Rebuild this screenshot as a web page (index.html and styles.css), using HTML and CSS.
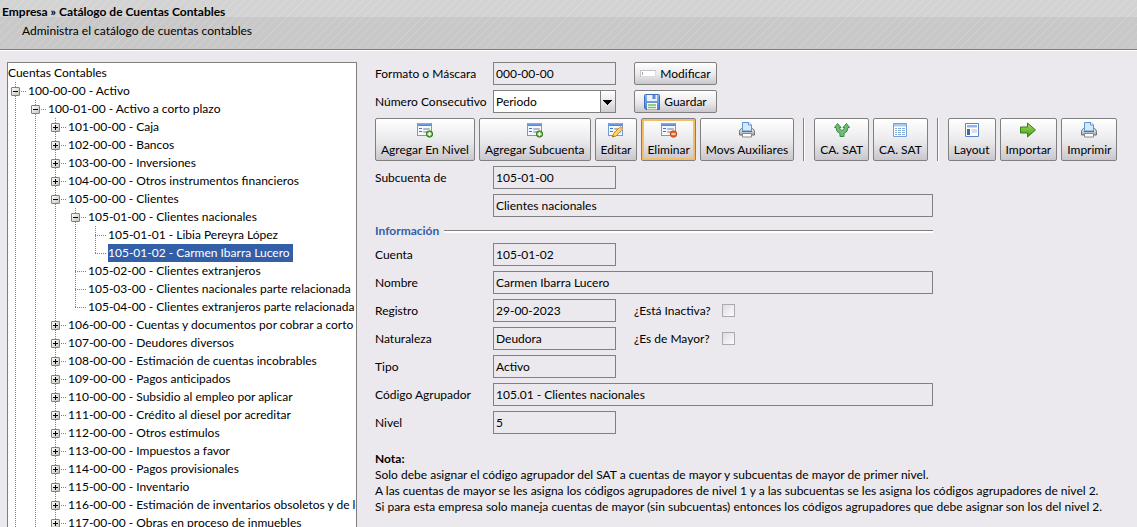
FILE: index.html
```html
<!DOCTYPE html>
<html lang="es">
<head>
<meta charset="utf-8">
<title>Catálogo de Cuentas Contables</title>
<link rel="stylesheet" href="styles.css">
</head>
<body>
<svg class="defs" aria-hidden="true">
  <defs>
    <linearGradient id="blue" x1="0" y1="0" x2="0" y2="1"><stop offset="0" stop-color="#8db8ea"/><stop offset="1" stop-color="#4a7fcb"/></linearGradient>
    <linearGradient id="green" x1="0" y1="0" x2="0" y2="1"><stop offset="0" stop-color="#a9e05a"/><stop offset="1" stop-color="#3f9a1c"/></linearGradient>
    <linearGradient id="steel" x1="0" y1="0" x2="0" y2="1"><stop offset="0" stop-color="#f4f4f4"/><stop offset="1" stop-color="#a2a4a8"/></linearGradient>
    <symbol id="form" viewBox="0 0 16 16">
      <rect x=".5" y="1.5" width="14" height="12" fill="#f4f8fe" stroke="#6f9bd8"/>
      <rect x="1" y="1" width="13" height="3" fill="url(#blue)"/>
      <path d="M2 6.500h3M2 9.500h3" stroke="#4577bf"/>
      <path d="M6.500 6.500h6v1h-6zM6.500 9.500h6v1h-6z" fill="#fff" stroke="#b5b8bd"/>
    </symbol>
    <symbol id="printer" viewBox="0 0 16 16">
      <path d="M2.500 6.500h11q2 1 2 3v3.500h-15v-3.500q0-2 2-3z" fill="url(#steel)" stroke="#707378"/>
      <path d="M3.500.5h6.500l2.500 2.500v6h-9z" fill="#d6e8fc" stroke="#5b94dc"/>
      <path d="M9.500.5v2.500h3" fill="#fff" stroke="#5b94dc"/>
      <path d="M3 9.500h10" stroke="#6a6d72"/>
      <path d="M3.500 11.500h9v3.500h-9z" fill="#fff" stroke="#85888d"/>
    </symbol>
  </defs>
</svg>

<header class="banner">
  <h1 class="banner-title">Empresa » Catálogo de Cuentas Contables</h1>
  <p class="banner-text">Administra el catálogo de cuentas contables</p>
</header>

<div class="layout">
  <nav class="tree" aria-label="Cuentas Contables">
    <div class="tree-root">Cuentas Contables</div>
    <ul>
      <li><div class="row"><button class="toggle minus" aria-label="Contraer"></button><span class="label">100-00-00 - Activo</span></div>
        <ul>
          <li><div class="row"><button class="toggle minus" aria-label="Contraer"></button><span class="label">100-01-00 - Activo a corto plazo</span></div>
            <ul>
              <li><div class="row"><button class="toggle" aria-label="Expandir"></button><span class="label">101-00-00 - Caja</span></div></li>
              <li><div class="row"><button class="toggle" aria-label="Expandir"></button><span class="label">102-00-00 - Bancos</span></div></li>
              <li><div class="row"><button class="toggle" aria-label="Expandir"></button><span class="label">103-00-00 - Inversiones</span></div></li>
              <li><div class="row"><button class="toggle" aria-label="Expandir"></button><span class="label">104-00-00 - Otros instrumentos financieros</span></div></li>
              <li><div class="row"><button class="toggle minus" aria-label="Contraer"></button><span class="label">105-00-00 - Clientes</span></div>
                <ul>
                  <li><div class="row"><button class="toggle minus" aria-label="Contraer"></button><span class="label">105-01-00 - Clientes nacionales</span></div>
                    <ul>
                      <li><div class="row leaf"><span class="label">105-01-01 - Libia Pereyra López</span></div></li>
                      <li class="last"><div class="row leaf"><span class="label selected">105-01-02 - Carmen Ibarra Lucero</span></div></li>
                    </ul>
                  </li>
                  <li><div class="row leaf"><span class="label">105-02-00 - Clientes extranjeros</span></div></li>
                  <li><div class="row leaf"><span class="label">105-03-00 - Clientes nacionales parte relacionada</span></div></li>
                  <li class="last"><div class="row leaf"><span class="label">105-04-00 - Clientes extranjeros parte relacionada</span></div></li>
                </ul>
              </li>
              <li><div class="row"><button class="toggle" aria-label="Expandir"></button><span class="label">106-00-00 - Cuentas y documentos por cobrar a corto plazo</span></div></li>
              <li><div class="row"><button class="toggle" aria-label="Expandir"></button><span class="label">107-00-00 - Deudores diversos</span></div></li>
              <li><div class="row"><button class="toggle" aria-label="Expandir"></button><span class="label">108-00-00 - Estimación de cuentas incobrables</span></div></li>
              <li><div class="row"><button class="toggle" aria-label="Expandir"></button><span class="label">109-00-00 - Pagos anticipados</span></div></li>
              <li><div class="row"><button class="toggle" aria-label="Expandir"></button><span class="label">110-00-00 - Subsidio al empleo por aplicar</span></div></li>
              <li><div class="row"><button class="toggle" aria-label="Expandir"></button><span class="label">111-00-00 - Crédito al diesel por acreditar</span></div></li>
              <li><div class="row"><button class="toggle" aria-label="Expandir"></button><span class="label">112-00-00 - Otros estímulos</span></div></li>
              <li><div class="row"><button class="toggle" aria-label="Expandir"></button><span class="label">113-00-00 - Impuestos a favor</span></div></li>
              <li><div class="row"><button class="toggle" aria-label="Expandir"></button><span class="label">114-00-00 - Pagos provisionales</span></div></li>
              <li><div class="row"><button class="toggle" aria-label="Expandir"></button><span class="label">115-00-00 - Inventario</span></div></li>
              <li><div class="row"><button class="toggle" aria-label="Expandir"></button><span class="label">116-00-00 - Estimación de inventarios obsoletos y de lento movimiento</span></div></li>
              <li><div class="row"><button class="toggle" aria-label="Expandir"></button><span class="label">117-00-00 - Obras en proceso de inmuebles</span></div></li>
            </ul>
          </li>
        </ul>
      </li>
    </ul>
  </nav>

  <main class="content">
    <div class="form">
      <label for="mascara">Formato o Máscara</label>
      <input id="mascara" class="field" type="text" value="000-00-00" readonly>
      <button class="btn aside">
        <svg class="icon" viewBox="0 0 16 16"><path d="M.5 4.500h15v6h-15z" fill="#fff" stroke="#dcdcde"/><path d="M0 4.500h16M.5 4v7" stroke="#c4c4c8"/><path d="M2.500 6v3" stroke="#aaa"/></svg>
        Modificar
      </button>

      <label for="consecutivo">Número Consecutivo</label>
      <select id="consecutivo" class="field select"><option>Periodo</option></select>
      <button class="btn aside">
        <svg class="icon" viewBox="0 0 16 16"><path d="M.5 1.500q0-1 1-1h13q1 0 1 1v14h-13.500l-1.500-1.500z" fill="url(#blue)" stroke="#3d6fbd"/><path d="M3 1h10v6h-10z" fill="#e8f1fc"/><path d="M8.500 1h3v4h-3z" fill="#5a8bd2"/><path d="M3 9h10v6.500h-10z" fill="#fff"/><path d="M4 11h8M4 13.500h8" stroke="#7dbb5d" stroke-width="1.500"/></svg>
        Guardar
      </button>
    </div>

    <div class="toolbar">
      <button class="btn tool"><svg class="icon" viewBox="0 0 16 16"><use href="#form"/><circle cx="12.500" cy="12" r="3.200" fill="#5fa83c" stroke="#3b7c22"/><path d="M12.500 10v4M10.500 12h4" stroke="#fff" stroke-width="1.300"/></svg>Agregar En Nivel</button>
      <button class="btn tool"><svg class="icon" viewBox="0 0 16 16"><use href="#form"/><circle cx="12.500" cy="12" r="3.200" fill="#5fa83c" stroke="#3b7c22"/><path d="M12.500 10v4M10.500 12h4" stroke="#fff" stroke-width="1.300"/></svg>Agregar Subcuenta</button>
      <button class="btn tool"><svg class="icon" viewBox="0 0 16 16"><use href="#form"/><path d="M12.500 4.500l2.500 2.500-7 7-3.500 1 1-3.500z" fill="#fbd466" stroke="#c98b1e"/><path d="M12.500 4.500l2.500 2.500-1.500 1.500-2.500-2.500z" fill="#f3b28c"/><path d="M4.500 15l.5-1.500 1 1z" fill="#444"/></svg>Editar</button>
      <button class="btn tool hot"><svg class="icon" viewBox="0 0 16 16"><use href="#form"/><circle cx="12.500" cy="12" r="3.200" fill="#ee6a2c" stroke="#c5430f"/><path d="M10.500 12h4" stroke="#fff" stroke-width="1.300"/></svg>Eliminar</button>
      <button class="btn tool"><svg class="icon" viewBox="0 0 16 16"><use href="#printer"/></svg>Movs Auxiliares</button>
      <span class="divider"></span>
      <button class="btn tool"><svg class="icon" viewBox="0 0 16 16"><path d="M6 14.500v-3q-4-1.500-4-6h-1.500l3-4 3.500 4h-1.500q0 2.500 2.500 3 2.500-.5 2.500-3h-1.500l3.500-4 3 4h-1.500q0 4.500-4 6v3z" fill="#72bd76" stroke="#3b8b47"/></svg>CA. SAT</button>
      <button class="btn tool"><svg class="icon" viewBox="0 0 16 16"><path d="M1.500 1.500h13v13h-13z" fill="#fff" stroke="#6f9fdc"/><path d="M2 2h12v2.500h-12z" fill="#a9c9f1"/><path d="M3 6.500h2M6 6.500h3M10 6.500h3M3 8.500h2M6 8.500h3M10 8.500h3M3 10.500h2M6 10.500h3M10 10.500h3M3 12.500h2M6 12.500h3M10 12.500h3" stroke="#84abd9"/></svg>CA. SAT</button>
      <span class="divider"></span>
      <button class="btn tool"><svg class="icon" viewBox="0 0 16 16"><path d="M1.500 1.500h13v13h-13z" fill="#fff" stroke="#5686cc"/><path d="M3 3h10v2.500h-10z" fill="#8db6ea"/><path d="M3 7h3v6h-3z" fill="#3769b5"/><path d="M7.500 7h5.500v4h-5.500z" fill="#dcdee2"/></svg>Layout</button>
      <button class="btn tool"><svg class="icon" viewBox="0 0 16 16"><path d="M.5 5h7v-4l8 7-8 7v-4h-7z" fill="url(#green)" stroke="#357f1b"/></svg>Importar</button>
      <button class="btn tool"><svg class="icon" viewBox="0 0 16 16"><use href="#printer"/></svg>Imprimir</button>
    </div>

    <div class="form">
      <label for="subcuenta">Subcuenta de</label>
      <input id="subcuenta" class="field" type="text" value="105-01-00" readonly>
      <input class="field wide" type="text" value="Clientes nacionales" aria-label="Nombre de la subcuenta" readonly>
      <h2 class="section">Información</h2>
      <label for="cuenta">Cuenta</label>
      <input id="cuenta" class="field" type="text" value="105-01-02" readonly>
      <label for="nombre">Nombre</label>
      <input id="nombre" class="field wide" type="text" value="Carmen Ibarra Lucero" readonly>
      <label for="registro">Registro</label>
      <input id="registro" class="field" type="text" value="29-00-2023" readonly>
      <div class="check"><label for="inactiva">¿Está Inactiva?</label><input id="inactiva" type="checkbox"></div>
      <label for="naturaleza">Naturaleza</label>
      <input id="naturaleza" class="field" type="text" value="Deudora" readonly>
      <div class="check"><label for="mayor">¿Es de Mayor?</label><input id="mayor" type="checkbox"></div>
      <label for="tipo">Tipo</label>
      <input id="tipo" class="field" type="text" value="Activo" readonly>
      <label for="codigo">Código Agrupador</label>
      <input id="codigo" class="field wide" type="text" value="105.01 - Clientes nacionales" readonly>
      <label for="nivel">Nivel</label>
      <input id="nivel" class="field" type="text" value="5" readonly>
    </div>

    <div class="note">
      <strong>Nota:</strong>
      <p>Solo debe asignar el código agrupador del SAT a cuentas de mayor y subcuentas de mayor de primer nivel.</p>
      <p>A las cuentas de mayor se les asigna los códigos agrupadores de nivel 1 y a las subcuentas se les asigna los códigos agrupadores de nivel 2.</p>
      <p>Si para esta empresa solo maneja cuentas de mayor (sin subcuentas) entonces los códigos agrupadores que debe asignar son los del nivel 2.</p>
    </div>
  </main>
</div>
</body>
</html>
```

FILE: styles.css
```css
* { box-sizing: border-box; }

body {
  display: flex;
  flex-direction: column;
  height: 100vh;
  margin: 0;
  overflow: hidden;
  background: #ebe9ed;
  color: #000;
  font: 12px/16px Lato, "Open Sans", sans-serif;
}

button, input, select { font: inherit; color: inherit; }
h1, h2, p, ul { margin: 0; padding: 0; font-size: inherit; }
ul { list-style: none; }
.defs { position: absolute; width: 0; height: 0; }

.banner {
  flex: none;
  height: 51px;
  padding: 4px 2px;
  border-bottom: 1px solid #fff;
  box-shadow: inset 0 -1px #808080;
  background:
    repeating-linear-gradient(135deg, transparent 0 4px, rgba(255, 255, 255, .16) 5px, transparent 6px),
    linear-gradient(#d3d3d3 17px, #c8c8c8 17px);
}
.banner-text { padding: 3px 20px; }

.layout {
  display: flex;
  flex: 1;
  min-height: 0;
  gap: 18px;
  padding: 11px 8px 0 7px;
}

.tree {
  flex: none;
  width: 350px;
  padding-top: 1px;
  overflow: hidden;
  border: 1px solid #808080;
  border-bottom: 0;
  background: #fff;
  line-height: 18px;
  white-space: nowrap;
}
.tree li {
  background: repeating-linear-gradient(#808080 0 1px, transparent 1px 2px) 7px 0 / 1px 100% no-repeat;
}
.tree li.last { background-size: 1px 10px; }
.tree li ul { padding-left: 20px; }
.row {
  display: flex;
  align-items: center;
  gap: 8px;
  height: 18px;
  padding-left: 3px;
  background: repeating-linear-gradient(90deg, #808080 0 1px, transparent 1px 2px) 7px 9px / 12px 1px no-repeat;
}
.row.leaf { padding-left: 20px; }
.label { padding-right: 3px; }
.selected { background: #335ea8; color: #fff; }
.toggle {
  flex: none;
  width: 9px;
  height: 9px;
  padding: 0;
  border: 1px solid #808080;
  border-radius: 1px;
  background:
    linear-gradient(#000, #000) center / 5px 1px no-repeat,
    linear-gradient(#000, #000) center / 1px 5px no-repeat,
    linear-gradient(135deg, #fff, #c8c4bc);
}
.toggle.minus {
  background:
    linear-gradient(#000, #000) center / 5px 1px no-repeat,
    linear-gradient(135deg, #fff, #c8c4bc);
}

.content {
  display: flex;
  flex: 1;
  flex-direction: column;
  gap: 5px;
  min-width: 0;
}

.form {
  display: grid;
  grid-template-columns: 118px 123px 1fr;
  gap: 5px 0;
  align-items: center;
  justify-items: start;
}
.form > label { grid-column: 1; white-space: nowrap; }
.field {
  grid-column: 2;
  width: 100%;
  height: 23px;
  padding: 0 2px;
  border: 1px solid #808080;
  border-radius: 0;
  background: transparent;
  outline: 0;
}
.wide { grid-column: 2 / 4; max-width: 440px; }
.select {
  appearance: none;
  background:
    conic-gradient(from 315deg at 50% 100%, #000 90deg, transparent 0) right 3px top 9px / 9px 5px no-repeat,
    linear-gradient(#808080, #808080) right 14px top 0 / 1px 100% no-repeat,
    linear-gradient(#fff, #d0ced3) right / 14px 100% no-repeat,
    #fff;
}

.btn {
  display: flex;
  align-items: center;
  justify-content: center;
  border: 1px solid #808080;
  border-radius: 2px;
  background: linear-gradient(#fff, #e9e8eb 55%, #c9c7cc);
  white-space: nowrap;
}
.aside {
  grid-column: 3;
  gap: 4px;
  width: 83px;
  height: 23px;
  margin-left: 18px;
  padding: 0;
}
.icon { flex: none; width: 16px; height: 16px; }

.toolbar { display: flex; align-items: center; gap: 4px; }
.tool {
  flex-direction: column;
  gap: 4px;
  height: 43px;
  padding: 0 5px;
}
.hot { box-shadow: inset 0 0 0 2px #f3bd66; }
.divider {
  width: 2px;
  height: 43px;
  margin: 0 5px;
  border-left: 1px solid #808080;
  background: #fff;
}

.section {
  display: flex;
  grid-column: 1 / 4;
  align-items: center;
  gap: 5px;
  width: 558px;
  max-width: 100%;
  padding-top: 2px;
  color: #335ea8;
  line-height: 14px;
}
.section::after {
  flex: 1;
  height: 2px;
  border-top: 1px solid #808080;
  background: #fff;
  content: "";
}

.check {
  display: flex;
  grid-column: 3;
  align-items: center;
  justify-content: space-between;
  width: 101px;
  margin-left: 18px;
  white-space: nowrap;
}
.check input {
  appearance: none;
  width: 13px;
  height: 13px;
  margin: 0;
  border: 1px solid #aca8b0;
  background: linear-gradient(135deg, #dedce0, #fbfbfb);
}

.note { margin-top: 12px; white-space: nowrap; }
```
